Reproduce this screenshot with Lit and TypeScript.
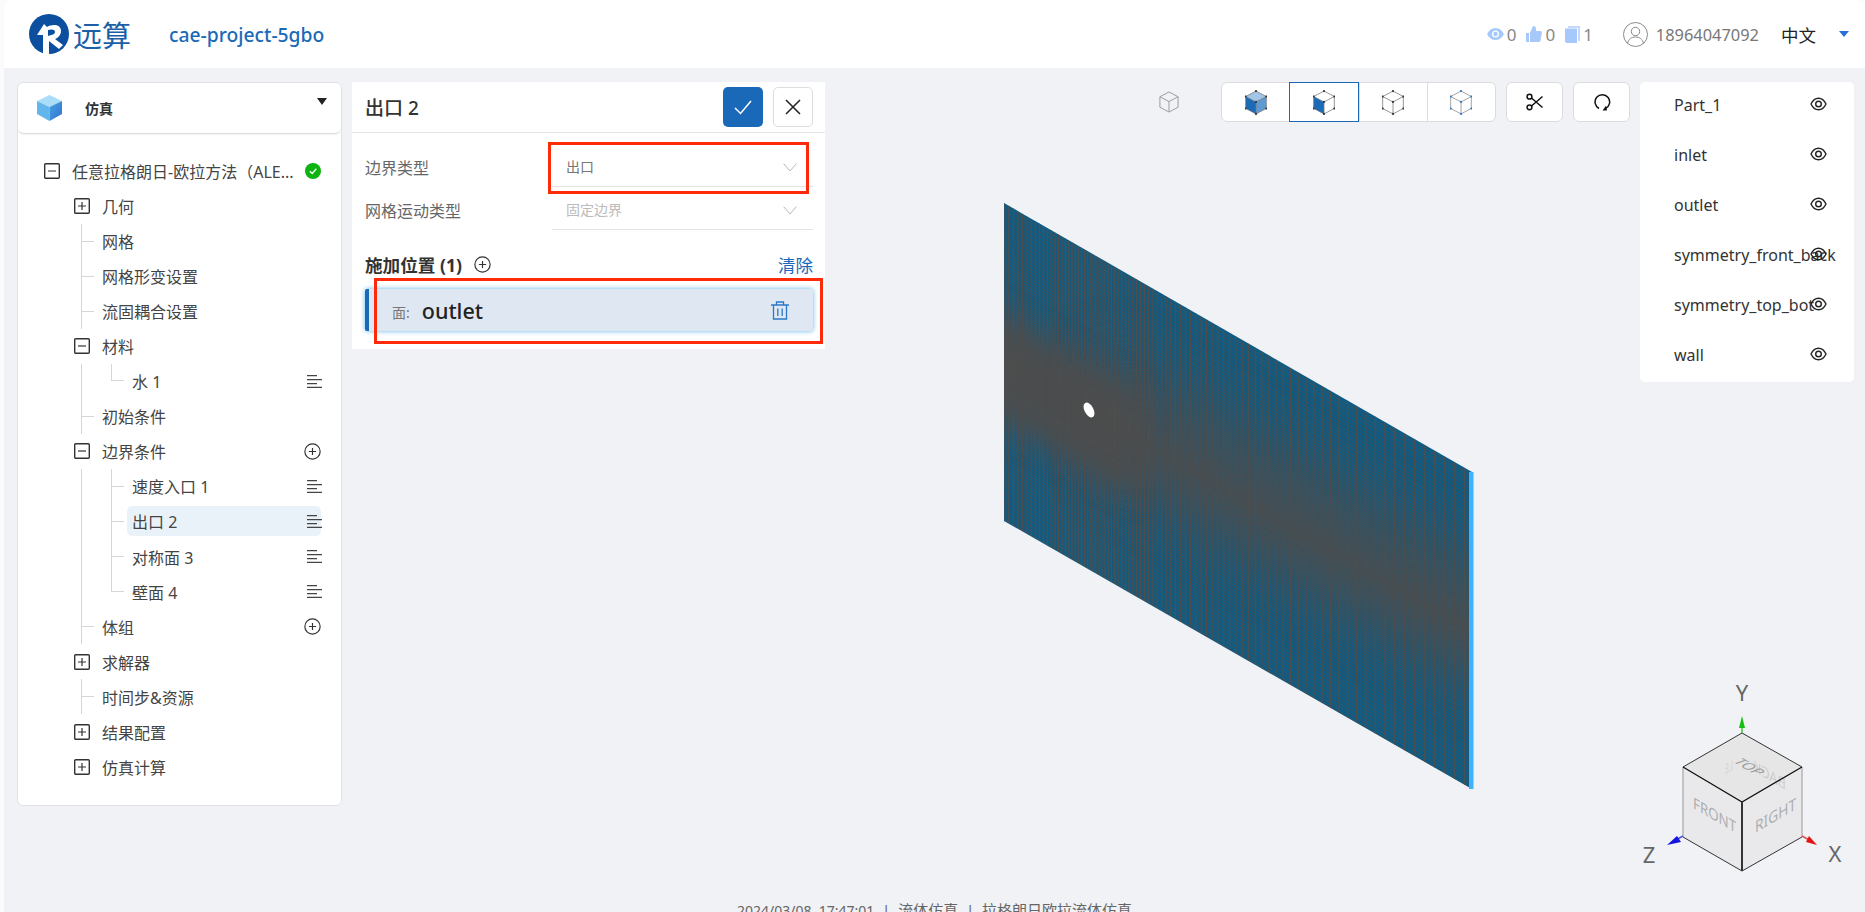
import { LitElement, css, html, svg } from 'lit';
import { customElement } from 'lit/decorators.js';
import { classMap } from 'lit/directives/class-map.js';

type Row = {
  label: string;
  level: number;
  box?: 'plus' | 'minus';
  action?: 'add' | 'menu';
  last?: boolean;
  selected?: boolean;
};

const rows: Row[] = [
  { label: '几何', level: 1, box: 'plus' },
  { label: '网格', level: 1 },
  { label: '网格形变设置', level: 1 },
  { label: '流固耦合设置', level: 1 },
  { label: '材料', level: 1, box: 'minus' },
  { label: '水 1', level: 2, action: 'menu', last: true },
  { label: '初始条件', level: 1 },
  { label: '边界条件', level: 1, box: 'minus', action: 'add' },
  { label: '速度入口 1', level: 2, action: 'menu' },
  { label: '出口 2', level: 2, action: 'menu', selected: true },
  { label: '对称面 3', level: 2, action: 'menu' },
  { label: '壁面 4', level: 2, action: 'menu', last: true },
  { label: '体组', level: 1, action: 'add' },
  { label: '求解器', level: 1, box: 'plus' },
  { label: '时间步&资源', level: 1 },
  { label: '结果配置', level: 1, box: 'plus' },
  { label: '仿真计算', level: 1, box: 'plus' },
];

const parts = ['Part_1', 'inlet', 'outlet', 'symmetry_front_back', 'symmetry_top_bot', 'wall'];

const boxIcon = (kind: 'plus' | 'minus') => html`<svg class="box" width="16" height="16" viewBox="0 0 16 16">
  <rect x=".7" y=".7" width="14.6" height="14.6" rx="1" fill="#fff" stroke="#333" stroke-width="1.4" />
  <path d=${kind === 'plus' ? 'M4 8h8M8 4v8' : 'M4 8h8'} stroke="#333" stroke-width="1.2" />
</svg>`;

const addIcon = html`<svg class="act" width="17" height="17" viewBox="0 0 16 16">
  <circle cx="8" cy="8" r="7.2" fill="none" stroke="#333" stroke-width="1.1" />
  <path d="M4.6 8h6.8M8 4.6v6.8" stroke="#333" stroke-width="1.1" />
</svg>`;

const menuIcon = html`<svg class="act menu" width="15" height="13" viewBox="0 0 15 13">
  <path d="M0 .7h10M0 4.7h15M0 8.7h10M0 12.3h15" stroke="#444" stroke-width="1.2" />
</svg>`;

const eyeIcon = html`<svg width="17" height="14" viewBox="0 0 17 14">
  <path d="M1 7C3 2.8 5.6 1.2 8.5 1.2S14 2.8 16 7c-2 4.2-4.6 5.8-7.5 5.8S3 11.2 1 7Z" fill="none" stroke="#222" stroke-width="1.4" />
  <circle cx="8.5" cy="7" r="2.8" fill="none" stroke="#222" stroke-width="1.4" />
</svg>`;

const chevron = html`<svg class="chev" width="14" height="9" viewBox="0 0 14 9">
  <path d="M.6.6 7 8 13.4.6" fill="none" stroke="#b8b8b8" stroke-width="1" />
</svg>`;

// little wire cube used by the view buttons
function cubeIcon(mode: string) {
  const dot = mode === 'points' ? '#2b78c9' : '#333';
  const line = mode === 'points' ? '#888' : '#777';
  const pts = [[10, 1], [19.5, 6], [19.5, 17], [10, 22], [.5, 17], [.5, 6], [10, 11]];
  return html`<svg width="22" height="25" viewBox="0 0 20 23">
    ${mode === 'solid' ? svg`<path d="M10 1 19.5 6 10 11 .5 6Z" fill="#a3c6e8" /><path d="M10 11 19.5 6V17L10 22Z" fill="#5f9bd3" />` : ''}
    ${mode === 'solid' || mode === 'face' ? svg`<path d="M.5 6 10 11V22L.5 17Z" fill="#1b6ab8" />` : ''}
    <path d="M10 1 19.5 6V17L10 22 .5 17V6ZM.5 6 10 11 19.5 6M10 11V22" fill="none" stroke=${line} stroke-width=".7" />
    ${pts.map(p => svg`<circle cx=${p[0]} cy=${p[1]} r="1" fill=${dot} />`)}
  </svg>`;
}

// mesh lines of the plate, denser around the hole and the middle band
function meshPaths() {
  let cols = '';
  for (let x = 1004; x < 1470; ) {
    cols += `M${x.toFixed(1)} ${(203 + (x - 1004) * 0.575).toFixed(1)}v317`;
    x += Math.min(10, 2.8 + Math.abs(x - 1089) / 42);
  }
  let lines = '';
  for (const dir of [-1, 1]) {
    for (let d = dir === 1 ? 0.4 : 0; d < 159; ) {
      const y = 362 + dir * d;
      lines += `M1004 ${y.toFixed(1)}L1472 ${(y + 269).toFixed(1)}`;
      d += 0.7 + d / 40;
    }
  }
  return { cols, lines };
}

const mesh = meshPaths();

@customElement('app-root')
export class AppRoot extends LitElement {
  renderRow(r: Row) {
    const cls = { row: true, ['level-' + r.level]: true, parent: !!r.box, last: !!r.last };
    return html`<div class=${classMap(cls)}>
      ${r.box ? boxIcon(r.box) : ''}
      <div class=${classMap({ content: true, selected: !!r.selected })}>
        <span>${r.label}</span>
        ${r.action === 'add' ? addIcon : r.action === 'menu' ? menuIcon : ''}
      </div>
    </div>`;
  }

  renderHeader() {
    return html`<header class="top">
      <svg class="logo" width="40" height="40" viewBox="0 0 40 40">
        <circle cx="20" cy="20" r="20" fill="#0b4f9e" />
        <path d="M8 21 15 10l3 3c5-3 14-3 14 4 0 4-3 7-6 8l8 6-4 4-10-8v13h-6V21Z" fill="#fff" />
        <path d="M19 16c3-1 7-1 7 2 0 2-3 3-7 4Z" fill="#0b4f9e" />
      </svg>
      <span class="brand">远算</span>
      <span class="project">cae-project-5gbo</span>
      <div class="stats">
        <svg width="17" height="12" viewBox="0 0 17 12"><path d="M0 6c2-4 5-6 8.5-6S15 2 17 6c-2 4-5 6-8.5 6S2 10 0 6Z" fill="#a6c8fb" /><circle cx="8.5" cy="6" r="3.5" fill="#fff" /><circle cx="8.5" cy="6" r="2.2" fill="#a6c8fb" /></svg>
        <span class="n first">0</span>
        <svg width="16" height="16" viewBox="0 0 16 16"><path d="M0 7h3v9H1a1 1 0 0 1-1-1ZM4 7l3-7c2 0 3 1 3 3v2h4.5c1 0 1.5 1 1.300 2l-1.300 7.500c-.2.8-.8 1.500-1.800 1.500H4Z" fill="#a6c8fb" /></svg>
        <span class="n">0</span>
        <svg width="15" height="17" viewBox="0 0 15 17"><path d="M3 0h12v15h-2V2H3Z" fill="#c4d9fb" /><path d="M0 2.500h12V17H2a2 2 0 0 1-2-2Z" fill="#a6c8fb" /></svg>
        <span class="n">1</span>
      </div>
      <svg class="avatar" width="25" height="25" viewBox="0 0 25 25">
        <circle cx="12.5" cy="12.5" r="12" fill="none" stroke="#8a8a8a" />
        <circle cx="12.5" cy="9.5" r="4.2" fill="none" stroke="#8a8a8a" />
        <path d="M4.5 21.5c1-4.5 4-6.5 8-6.5s7 2 8 6.5" fill="none" stroke="#8a8a8a" />
      </svg>
      <span class="phone">18964047092</span>
      <span class="lang">中文</span>
      <i class="lang-arrow"></i>
    </header>`;
  }

  renderSidebar() {
    return html`<aside class="side">
      <div class="side-head">
        <svg width="27" height="28" viewBox="0 0 27 28">
          <defs><linearGradient id="cf" x1="0" y1="0" x2="1" y2="1"><stop offset="0" stop-color="#4aa0e6" /><stop offset="1" stop-color="#2f74cc" /></linearGradient></defs>
          <path d="M13.5 1 26 7 13.5 13 1 7Z" fill="#a9ddf8" />
          <path d="M1 7 13.5 13V27L1 20Z" fill="#62b6ec" />
          <path d="M26 7 13.5 13V27L26 20Z" fill="url(#cf)" />
        </svg>
        <b>仿真</b>
        <i class="tri"></i>
      </div>
      <div class="tree">
        <div class="row root">
          ${boxIcon('minus')}
          <div class="content">
            <span>任意拉格朗日-欧拉方法（ALE...</span>
            <svg class="act" width="16" height="16" viewBox="0 0 16 16">
              <circle cx="8" cy="8" r="8" fill="#0db30f" />
              <path d="M4.8 8.2 7.2 10.5 11.3 5.8" fill="none" stroke="#fff" stroke-width="1.3" />
            </svg>
          </div>
        </div>
        ${rows.map(r => this.renderRow(r))}
      </div>
    </aside>`;
  }

  renderPanel() {
    return html`<section class="panel">
      <div class="panel-head">
        <span class="title">出口 2</span>
        <button class="ok">
          <svg width="18" height="15" viewBox="0 0 18 15"><path d="M1 8 6.5 13.5 17 1" fill="none" stroke="#fff" stroke-width="1.5" /></svg>
        </button>
        <button class="close">
          <svg width="16" height="16" viewBox="0 0 16 16"><path d="M1 1 15 15M15 1 1 15" stroke="#222" stroke-width="1.5" /></svg>
        </button>
      </div>
      <div class="form">
        <div class="field">
          <label>边界类型</label>
          <div class="select"><span>出口</span>${chevron}</div>
        </div>
        <div class="field">
          <label>网格运动类型</label>
          <div class="select off"><span>固定边界</span>${chevron}</div>
        </div>
        <div class="place">
          <b>施加位置 (1)</b>
          ${addIcon}
          <a>清除</a>
        </div>
        <div class="item">
          <small>面:</small>
          <span>outlet</span>
          <svg width="18" height="19" viewBox="0 0 18 19">
            <path d="M0 4h18M5.5 4V1h7v3M2.5 4v14h13V4M6.8 7.5v7.5M11.2 7.5v7.5" fill="none" stroke="#2b78c9" stroke-width="1.3" />
          </svg>
        </div>
      </div>
      <div class="mark mark-a"></div>
      <div class="mark mark-b"></div>
    </section>`;
  }

  renderViewer() {
    return html`<div class="viewer">
      <svg class="plain-cube" width="20" height="22" viewBox="0 0 20 23">
        <path d="M10 1 19.5 6V17L10 22 .5 17V6ZM.5 6 10 11 19.5 6M10 11V22" fill="none" stroke="#999" />
      </svg>
      <div class="views">
        <button>${cubeIcon('solid')}</button>
        <button class="on">${cubeIcon('face')}</button>
        <button>${cubeIcon('wire')}</button>
        <button>${cubeIcon('points')}</button>
      </div>
      <button class="tool">
        <svg width="18" height="18" viewBox="0 0 18 18">
          <circle cx="3.5" cy="3.7" r="2.4" fill="none" stroke="#111" stroke-width="1.5" />
          <circle cx="3.5" cy="14.3" r="2.4" fill="none" stroke="#111" stroke-width="1.5" />
          <path d="M5.5 5 16.5 14.5M5.5 13 16.5 3.5" stroke="#111" stroke-width="1.5" />
        </svg>
      </button>
      <button class="tool">
        <svg width="18" height="18" viewBox="0 0 18 18">
          <path d="M6 15.5A7.3 7.3 0 1 1 12.5 15.6" fill="none" stroke="#111" stroke-width="1.5" />
          <path d="M9.5 17.5 14 17.5 13 12.8Z" fill="#111" />
        </svg>
      </button>
      <div class="parts">
        ${parts.map(p => html`<div class="part"><span>${p}</span>${eyeIcon}</div>`)}
      </div>
    </div>`;
  }

  // plate and axis cube, drawn in page coordinates
  renderCanvas() {
    return html`<svg class="canvas" viewBox="4 68 1861 844" width="1861" height="844">
      <defs>
        <clipPath id="plate"><path d="M1004 203 1472 472V789L1004 521Z" /></clipPath>
        <filter id="soft" x="-30%" y="-30%" width="160%" height="160%"><feGaussianBlur stdDeviation="14" /></filter>
        <filter id="wide" x="-20%" y="-40%" width="140%" height="180%"><feGaussianBlur stdDeviation="26" /></filter>
      </defs>
      <path d="M1004 203 1472 472V789L1004 521Z" fill="#0d5c85" />
      <g clip-path="url(#plate)">
        <g fill="none" stroke="#4f4f4f">
          <path d=${mesh.lines} stroke-width=".75" />
          <path d=${mesh.cols} stroke-width="1.1" />
        </g>
        <path d="M960 290 1140 393V500L960 397Z" fill="#4d4d4d" opacity=".92" filter="url(#soft)" />
        <path d="M1100 340 1500 570V700L1100 470Z" fill="#4d4d4d" opacity=".5" filter="url(#wide)" />
      </g>
      <ellipse cx="1089" cy="410" rx="4.5" ry="8" transform="rotate(-28 1089 410)" fill="#fff" />
      <rect x="1469" y="472" width="4.5" height="317" fill="#3db3ff" />

      <path d="M1742 733 1802 767V837L1742 871 1683 837V767Z" fill="#e9e9eb" />
      <path d="M1742 733 1802 767 1742 802 1683 767Z" fill="#e6e6e7" />
      <g fill="#aeaeae" font-family="Noto Sans, sans-serif">
        <text transform="matrix(.5 -.28 0 .9 1729 772) scale(-1 1)" font-size="15" opacity=".35" text-anchor="middle">LE</text>
        <text transform="matrix(-.86 -.5 0 1 1786 790)" font-size="15" opacity=".45">BACK</text>
        <text transform="matrix(.86 .5 -.72 .42 1733 762)" font-size="16" fill="#a0a0a0" font-style="italic">TOP</text>
        <text transform="matrix(.86 .5 0 1 1693 808)" font-size="15.5">FRONT</text>
        <text transform="matrix(.86 -.5 0 1 1755 833)" font-size="16">RIGHT</text>
      </g>
      <path d="M1683 767V837M1802 767V837" stroke="#999" />
      <path d="M1742 733 1802 767M1742 733 1683 767M1683 837 1742 871 1802 837" fill="none" stroke="#333" />
      <path d="M1683 767 1742 802 1802 767" fill="none" stroke="#111" stroke-width="1.3" />
      <path d="M1742 802V871" stroke="#333" stroke-width="2" />

      <path d="M1742 733V722" stroke="#3fc43f" stroke-width="1.5" />
      <path d="M1742 716 1745 728H1739Z" fill="#13c013" />
      <path d="M1683 836 1674 841" stroke="#4b56d8" stroke-width="1.5" />
      <path d="M1667 845 1677 836 1681 842Z" fill="#1414e0" />
      <path d="M1802 836 1811 841" stroke="#e05050" stroke-width="1.5" />
      <path d="M1817 845 1806 842 1809 836Z" fill="#e01414" />
      <g fill="#666" font-family="Noto Sans, sans-serif" font-size="22" text-anchor="middle">
        <text x="1742" y="701">Y</text>
        <text x="1649" y="863">Z</text>
        <text x="1835" y="862">X</text>
      </g>
    </svg>`;
  }

  override render() {
    return html`<div class="app">
      ${this.renderHeader()}
      <main class="main">
        ${this.renderCanvas()}
        ${this.renderSidebar()}
        ${this.renderPanel()}
        ${this.renderViewer()}
        <div class="foot"><span class="stamp">2024/03/08&nbsp;&nbsp;17:47:01</span>&nbsp;&nbsp;|&nbsp;&nbsp;流体仿真&nbsp;&nbsp;|&nbsp;&nbsp;拉格朗日欧拉流体仿真</div>
      </main>
    </div>`;
  }

  static override styles = css`
    :host {
      display: block;
      height: 100vh;
      overflow: hidden;
      background: #fbfbfb;
      font-family: 'Noto Sans', 'Noto Sans CJK SC', sans-serif;
      color: #333;
    }

    button {
      padding: 0;
      font: inherit;
      display: flex;
      align-items: center;
      justify-content: center;
      background: #fff;
      cursor: pointer;
    }

    .app {
      height: 100%;
      margin-left: 4px;
      display: flex;
      flex-direction: column;
      background: #f0f2f6;
      border-radius: 8px 8px 0 0;
      overflow: hidden;
    }

    .top {
      height: 68px;
      flex: none;
      display: flex;
      align-items: center;
      padding: 0 16px 0 25px;
      background: #fff;
    }

    .logo {
      flex: none;
    }

    .brand {
      margin-left: 4px;
      font-size: 29px;
      color: #1b5fa8;
    }

    .project {
      margin-left: 38px;
      font-size: 19.3px;
      font-weight: 500;
      color: #1a6ab8;
    }

    .stats {
      margin-left: auto;
      display: flex;
      align-items: center;
      color: #888;
      font-size: 17px;
    }

    .n {
      margin: 0 10px 0 3px;
    }

    .avatar {
      margin-left: 20px;
    }

    .phone {
      margin-left: 8px;
      font-size: 16.4px;
      color: #777;
    }

    .lang {
      margin-left: 22px;
      font-size: 17.5px;
      color: #222;
    }

    .lang-arrow {
      margin-left: 23px;
      border: 5px solid transparent;
      border-top: 6px solid #2a6fd6;
      border-bottom: 0;
    }

    .main {
      position: relative;
      flex: 1;
      min-height: 0;
      display: flex;
      align-items: flex-start;
      gap: 10px;
      padding: 14px 11px 0 13px;
    }

    .canvas {
      position: absolute;
      left: 0;
      top: 0;
    }

    .side {
      position: relative;
      flex: none;
      width: 325px;
      height: 724px;
      box-sizing: border-box;
      background: #fff;
      border: 1px solid #e2e3e7;
      border-radius: 6px;
    }

    .side-head {
      height: 50px;
      display: flex;
      align-items: center;
      padding-left: 18px;
      border-bottom: 1px solid #dcdcdf;
      border-radius: 6px;
      box-shadow: 0 1px 2px #0000000f;
    }

    .side-head b {
      margin-left: 22px;
      font-size: 14px;
      color: #333;
    }

    .tri {
      margin: -14px 14px 0 auto;
      border: 5.5px solid transparent;
      border-top: 7px solid #222;
      border-bottom: 0;
    }

    .tree {
      padding: 19.5px 20px 0 0;
      font-size: 16px;
    }

    .row {
      position: relative;
      height: 35.06px;
      display: flex;
      align-items: center;
      color: #444;
    }

    .row.root {
      padding-left: 26px;
    }

    .box {
      flex: none;
      margin-right: 12px;
    }

    .level-1 {
      padding-left: 56px;
    }

    .level-1:not(.parent) {
      padding-left: 84px;
    }

    .level-2 {
      padding-left: 109px;
    }

    .content {
      flex: 1;
      min-width: 0;
      height: 30px;
      display: flex;
      align-items: center;
      justify-content: space-between;
      white-space: nowrap;
      border-radius: 5px;
    }

    .level-2 .content {
      padding-left: 5px;
    }

    .content.selected {
      background: #eaf2f9;
    }

    .menu {
      margin-right: -1px;
    }

    .row:not(.root):not(.parent)::before {
      content: '';
      position: absolute;
      left: 63px;
      top: 0;
      bottom: 0;
      width: 13px;
      background:
        linear-gradient(#d6d6d6, #d6d6d6) 0 0 / 1px 100% no-repeat,
        linear-gradient(#d6d6d6, #d6d6d6) 0 50% / 13px 1px no-repeat;
    }

    .row.level-2::before {
      background: linear-gradient(#d6d6d6, #d6d6d6) 0 0 / 1px 100% no-repeat !important;
    }

    .row.level-2::after {
      content: '';
      position: absolute;
      left: 93px;
      top: 0;
      bottom: 0;
      width: 13px;
      background:
        linear-gradient(#d6d6d6, #d6d6d6) 0 0 / 1px 100% no-repeat,
        linear-gradient(#d6d6d6, #d6d6d6) 0 50% / 13px 1px no-repeat;
    }

    .row.level-2.last::after {
      bottom: 50%;
      background:
        linear-gradient(#d6d6d6, #d6d6d6) 0 0 / 1px 100% no-repeat,
        linear-gradient(#d6d6d6, #d6d6d6) 0 100% / 13px 1px no-repeat;
    }

    .panel {
      position: relative;
      flex: none;
      width: 473px;
      height: 267px;
      background: #fff;
    }

    .panel-head {
      height: 51px;
      box-sizing: border-box;
      display: flex;
      align-items: center;
      gap: 10px;
      padding: 0 12px 0 13px;
      border-bottom: 1px solid #e4e4e6;
    }

    .title {
      margin-right: auto;
      font-size: 19px;
      font-weight: 500;
      color: #333;
    }

    .ok,
    .close {
      width: 40px;
      height: 40px;
      border-radius: 5px;
      box-sizing: border-box;
    }

    .ok {
      background: #1a69b8;
      border: 0;
    }

    .close {
      border: 1px solid #ddd;
    }

    .form {
      padding: 11px 12px 0 13px;
    }

    .field {
      height: 43px;
      display: flex;
      align-items: center;
    }

    .field label {
      width: 187px;
      padding-top: 3px;
      font-size: 16px;
      color: #666;
    }

    .select {
      flex: 1;
      height: 100%;
      box-sizing: border-box;
      display: flex;
      align-items: center;
      justify-content: space-between;
      padding: 1px 16px 0 14px;
      border-bottom: 1px solid #e4e4e4;
      font-size: 14px;
      color: #777;
    }

    .select.off {
      color: #bbb;
    }

    .chev {
      margin-top: 4px;
    }

    .place {
      margin-top: 21px;
      height: 26px;
      display: flex;
      align-items: center;
      gap: 12px;
    }

    .place b {
      font-size: 17.6px;
      color: #333;
    }

    .place a {
      margin-left: auto;
      font-size: 17.5px;
      color: #1a69b8;
    }

    .item {
      margin-top: 12px;
      height: 42px;
      display: flex;
      align-items: center;
      padding: 0 24px 0 23px;
      background: #dfe8f2;
      border-left: 4px solid #1a69b8;
      border-radius: 2px;
      box-shadow: 0 0 5px #5db5e8;
    }

    .item small {
      margin-top: 4px;
      font-size: 14px;
      color: #777;
    }

    .item span {
      margin: 0 auto 0 12px;
      font-size: 21.5px;
      font-weight: 500;
      color: #222;
    }

    .mark {
      position: absolute;
      border: 3px solid #ff2a0a;
      box-sizing: border-box;
    }

    .mark-a {
      left: 196px;
      top: 60px;
      width: 261px;
      height: 52px;
    }

    .mark-b {
      left: 22px;
      top: 196px;
      width: 449px;
      height: 66px;
    }

    .viewer {
      position: relative;
      flex: 1;
      display: flex;
      justify-content: flex-end;
      align-items: flex-start;
    }

    .plain-cube {
      margin: 9px 42px 0 0;
    }

    .views {
      display: flex;
      width: 275px;
      height: 40px;
      box-sizing: border-box;
      background: #fff;
      border: 1px solid #dcdcdf;
      border-radius: 6px;
    }

    .views button {
      flex: 1;
      margin: -1px 0;
      border: 0;
      border-left: 1px solid #dcdcdf;
      background: transparent;
    }

    .views button:first-child {
      border-left: 0;
    }

    .views button.on {
      border: 1.5px solid #1a69b8;
    }

    .tool {
      margin-left: 10px;
      width: 57px;
      height: 40px;
      border: 1px solid #dcdcdf;
      border-radius: 6px;
    }

    .parts {
      margin-left: 10px;
      width: 214px;
      height: 300px;
      flex: none;
      background: #fff;
      border-radius: 5px;
    }

    .part {
      position: relative;
      height: 50px;
      box-sizing: border-box;
      display: flex;
      align-items: center;
      padding: 0 0 4px 34px;
      font-size: 16px;
      color: #333;
      white-space: nowrap;
    }

    .part svg {
      position: absolute;
      left: 170px;
      top: 15px;
    }

    .foot {
      position: absolute;
      left: 0;
      right: 0;
      top: 832px;
      text-align: center;
      font-size: 15px;
      line-height: 20px;
      color: #666;
      white-space: nowrap;
    }

    .stamp {
      font-size: 14px;
    }
  `;
}
